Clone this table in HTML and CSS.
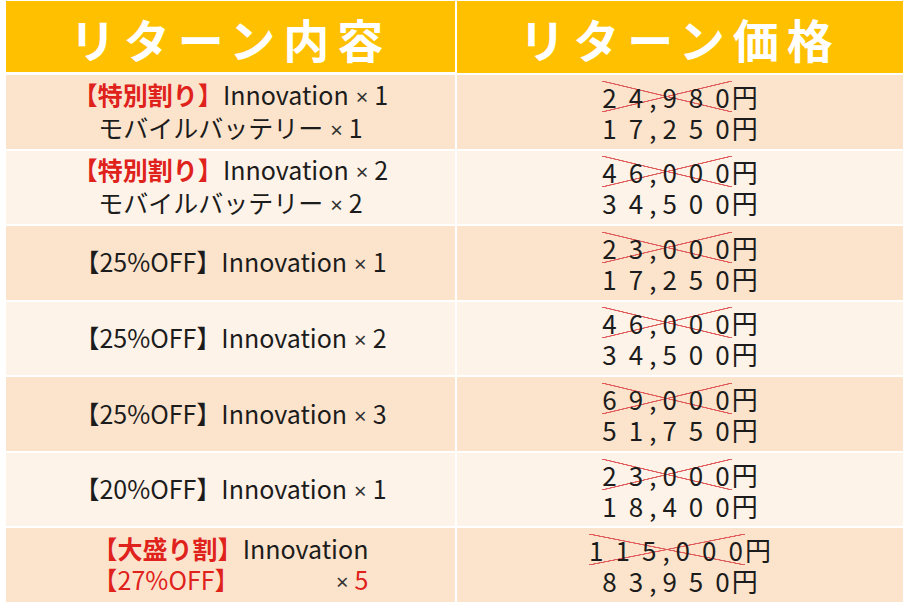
FILE: index.html
```html
<!DOCTYPE html>
<html lang="ja">
<head>
<meta charset="utf-8">
<link rel="stylesheet" href="styles.css">
</head>
<body>
<div class="table">
  <div class="hd">リターン内容</div>
  <div class="hd">リターン価格</div>

  <div class="cell dark"><div class="desc"><div><span class="red b">【特別割り】</span>Innovation<span class="m">×</span>1</div><div>モバイルバッテリー<span class="m">×</span>1</div></div></div>
  <div class="cell dark price"><div><span class="old">2<span class="k">4</span><span class="c">,</span>98<span class="l">0</span></span>円</div><div><span class="num">1<span class="k">7</span><span class="c">,</span>25<span class="l">0</span></span>円</div></div>

  <div class="cell light"><div class="desc"><div><span class="red b">【特別割り】</span>Innovation<span class="m">×</span>2</div><div>モバイルバッテリー<span class="m">×</span>2</div></div></div>
  <div class="cell light price"><div><span class="old">4<span class="k">6</span><span class="c">,</span>00<span class="l">0</span></span>円</div><div><span class="num">3<span class="k">4</span><span class="c">,</span>50<span class="l">0</span></span>円</div></div>

  <div class="cell dark"><div class="desc">【25%OFF】Innovation<span class="m">×</span>1</div></div>
  <div class="cell dark price"><div><span class="old">2<span class="k">3</span><span class="c">,</span>00<span class="l">0</span></span>円</div><div><span class="num">1<span class="k">7</span><span class="c">,</span>25<span class="l">0</span></span>円</div></div>

  <div class="cell light"><div class="desc">【25%OFF】Innovation<span class="m">×</span>2</div></div>
  <div class="cell light price"><div><span class="old">4<span class="k">6</span><span class="c">,</span>00<span class="l">0</span></span>円</div><div><span class="num">3<span class="k">4</span><span class="c">,</span>50<span class="l">0</span></span>円</div></div>

  <div class="cell dark"><div class="desc">【25%OFF】Innovation<span class="m">×</span>3</div></div>
  <div class="cell dark price"><div><span class="old">6<span class="k">9</span><span class="c">,</span>00<span class="l">0</span></span>円</div><div><span class="num">5<span class="k">1</span><span class="c">,</span>75<span class="l">0</span></span>円</div></div>

  <div class="cell light"><div class="desc">【20%OFF】Innovation<span class="m">×</span>1</div></div>
  <div class="cell light price"><div><span class="old">2<span class="k">3</span><span class="c">,</span>00<span class="l">0</span></span>円</div><div><span class="num">1<span class="k">8</span><span class="c">,</span>40<span class="l">0</span></span>円</div></div>

  <div class="cell dark"><div class="desc big"><div><span class="red b">【大盛り割】</span>Innovation</div><div class="split"><span class="red">【27%OFF】</span><span><span class="m">×</span><span class="red">5</span></span></div></div></div>
  <div class="cell dark price"><div><span class="old">11<span class="k">5</span><span class="c">,</span>00<span class="l">0</span></span>円</div><div><span class="num">8<span class="k">3</span><span class="c">,</span>95<span class="l">0</span></span>円</div></div>
</div>
</body>
</html>
```

FILE: styles.css
```css
html, body {
  margin: 0;
  padding: 0;
  background: #ffffff;
}
body {
  font-family: "Noto Sans CJK JP", "Noto Sans", sans-serif;
  color: #1c1c1c;
}
.table {
  margin: 1px 0 0 6px;
  width: 897px;
  height: 601px;
  display: grid;
  grid-template-columns: 449px 446px;
  grid-template-rows: 72px repeat(7, 1fr);
  column-gap: 2px;
  row-gap: 2px;
}
.hd {
  background: #ffc000;
  color: #ffffff;
  font-weight: 700;
  font-size: 46px;
  letter-spacing: 8px;
  display: flex;
  align-items: center;
  justify-content: center;
  line-height: 1;
  padding-top: 2px;
}
.table .hd:first-child {
  margin-bottom: 1px;
}
.cell {
  display: flex;
  align-items: center;
  justify-content: center;
  font-size: 25px;
  line-height: 31px;
}
.dark { background: #fce4cc; }
.light { background: #fef3e8; }
.desc {
  text-align: center;
}
.m {
  font-family: "Noto Sans", sans-serif;
  font-size: 22px;
  padding: 0 6px 0 7px;
  color: #333333;
}
.big {
  display: flex;
  flex-direction: column;
}
.split {
  display: flex;
  justify-content: space-between;
}
.red { color: #e0221c; }
.b { font-weight: 700; }
.price {
  flex-direction: column;
  font-size: 26px;
}
.price > div {
  display: flex;
  align-items: baseline;
}
.old, .num {
  display: inline-block;
  letter-spacing: 12px;
}
.k {
  letter-spacing: 6px;
}
.c {
  letter-spacing: 6px;
}
.l {
  letter-spacing: 2px;
}
.old {
  background:
    linear-gradient(to top right, transparent calc(50% - 0.8px), #e05a5a calc(50% - 0.4px), #e05a5a calc(50% + 0.4px), transparent calc(50% + 0.8px)),
    linear-gradient(to bottom right, transparent calc(50% - 0.8px), #e05a5a calc(50% - 0.4px), #e05a5a calc(50% + 0.4px), transparent calc(50% + 0.8px));
}
```
